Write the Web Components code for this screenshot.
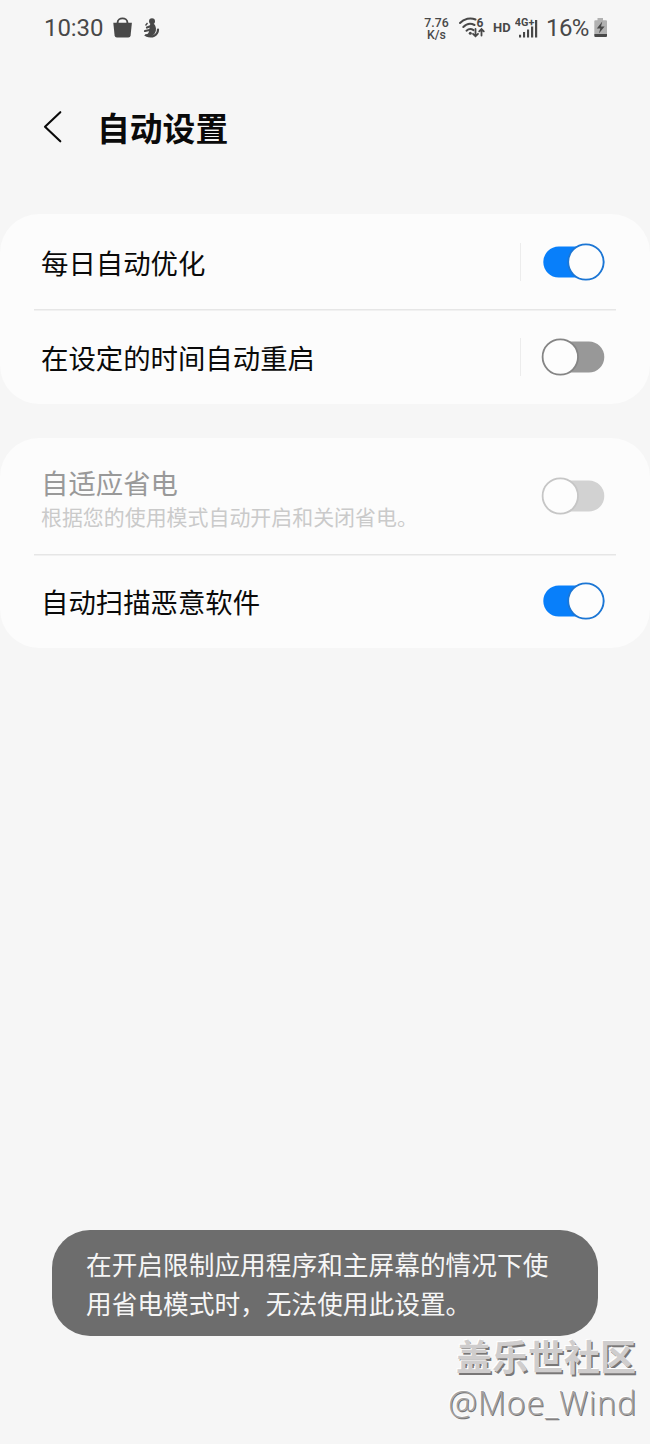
<!DOCTYPE html>
<html lang="zh-CN">
<head>
<meta charset="utf-8">
<title>自动设置</title>
<style>
html,body{margin:0;background:#f6f6f6}
body{font-family:"Noto Sans CJK SC",sans-serif;color:#0a0a0a}
</style>
</head>
<body>
<settings-screen></settings-screen>
<script>
const define=(name,html,setup)=>customElements.define(name,class extends HTMLElement{
  constructor(){
    super();
    const t=document.createElement('template');
    t.innerHTML=html;
    this.attachShadow({mode:'open'}).append(t.content.cloneNode(true));
  }
  connectedCallback(){ if(setup) setup(this,this.shadowRoot); }
});

define('status-bar',`<style>
:host{display:flex;height:56px;box-sizing:border-box;padding:0 42px 0 44px;align-items:center;justify-content:space-between;font-family:Roboto,sans-serif;color:#484848}
div{display:flex;align-items:center}
svg{display:block;flex:none}
.time{font-size:24px;line-height:28px;width:69px;white-space:nowrap;letter-spacing:-.1px}
.speed{display:flex;flex-direction:column;font-size:12.300px;line-height:12px;text-align:center;width:27px;font-weight:500;margin-right:8px;padding-top:1px}
.hd{font-size:13px;font-weight:700;width:22px;line-height:16px}
.pct{font-size:24px;line-height:28px;width:47px;white-space:nowrap;letter-spacing:-.6px}
</style>
<div><span class="time">10:30</span>
<svg width="48" height="24" viewBox="113 16 48 24"><path d="M117.600 24v-1.500c0-5.500 9.800-5.500 9.800 0V24" fill="none" stroke="#484848" stroke-width="1.900"/><path d="M113.300 22.800h18.600l-1.300 12.700q-.300 2-2.300 2h-11.400q-2 0-2.300-2z" fill="#484848"/>
<circle cx="152" cy="21.300" r="3" fill="#484848"/><path d="M150.300 23.500h3.500c2.500 3 2.900 6.500 1.200 9.500-2 4-8 4.500-11 2.200 3-.7 4.500-1.700 4.800-3.200z" fill="#484848"/><path d="M151 26l-4 1.500M149.500 30l-4.500 1M146 35.300c6 2.600 11.800.3 12-5.800" fill="none" stroke="#484848" stroke-width="2.200" stroke-linecap="round"/><path d="M145.500 25.500l2-2.500" stroke="#484848" stroke-width="1.300"/></svg></div>
<div><span class="speed"><span>7.76</span><span>K/s</span></span>
<svg width="35" height="26" viewBox="458 15 35 26"><g fill="none" stroke="#484848" stroke-width="2" stroke-linecap="round"><path d="M460 23c4-4.500 10.500-5.700 15.500-3.500M463.300 27c3-3.100 7.500-3.900 11.200-2M466.500 30.700c2-1.800 4.700-2 7-.6"/><path d="M475.500 29v7M473 33.800l2.500 2.500 2.500-2.500M481.500 35.500v-6M479.200 31.400l2.300-2.400 2.300 2.400" stroke-width="1.800"/></g><circle cx="470.300" cy="33.200" r="1.500" fill="#484848"/><text x="476.500" y="27.300" font-family="Roboto" font-size="12" font-weight="700" fill="#484848">6</text></svg>
<span class="hd">HD</span>
<svg width="31" height="26" viewBox="515 15 31 26"><g fill="#484848"><path d="M519 34.800h2.100v2.700H519zM523 32h2.100v5.500H523zM527 29.500h2.100v8H527zM531 26.500h2.200v11H531zM535 20h2.200v17.500H535z"/><text x="514.800" y="26" font-family="Roboto" font-size="11" font-weight="700" textLength="19.500" lengthAdjust="spacingAndGlyphs">4G+</text></g></svg>
<span class="pct">16%</span>
<svg width="15" height="24" viewBox="593 16 15 24"><path d="M597.500 18h5.500v2.300h3q1 0 1 1V34h-12.700V21.300q0-1 1-1h2.200z" fill="#b1b1b1"/><path d="M594.300 34H607v2q0 1-1 1h-10.700q-1 0-1-1z" fill="#484848"/><path d="M602.300 21.500l-5.500 7h3.500l-1.400 5 5.700-7h-3.600z" fill="#484848"/></svg></div>`);

define('page-header',`<style>
:host{display:flex;height:158px;box-sizing:border-box;padding:0 0 16px 43px;align-items:center}
svg{display:block;flex:none;margin-right:34px}
h1{margin:0;font-size:32.800px;font-weight:700;line-height:44px;color:#0a0a0a;padding-bottom:1px}
</style>
<svg width="20" height="34" viewBox="43 110 20 34"><path d="M60.300 112.200L45 126.700l15.300 14.600" fill="none" stroke="#0a0a0a" stroke-width="2.100" stroke-linecap="round" stroke-linejoin="round"/></svg><h1><slot></slot></h1>`);

define('toggle-switch',`<style>
:host{display:block;width:66px;height:40px;flex:none;--c:#989898;--edge:#858585}
:host([on]){--c:#087ffa;--edge:#1c76d4}
:host([disabled]){--c:#d2d2d2;--edge:#c6c6c6}
svg{display:block}
.track{fill:var(--c)}
.thumb{fill:#fdfdfd;stroke:var(--edge);stroke-width:1.800}
</style>
<svg width="66" height="40" viewBox="0 0 66 40"><rect class="track" x="3.300" y="4.500" width="61" height="31" rx="15.500"/><circle class="thumb" cx="20.300" cy="20" r="17.700"/></svg>`,
(host,root)=>{
  if(host.hasAttribute('on')) root.querySelector('.thumb').setAttribute('cx','45.900');
});

define('setting-row',`<style>
:host{display:flex;align-items:center;box-sizing:border-box;height:var(--h,95px);padding:0 44px 0 41px}
.text{flex:1;display:flex;flex-direction:column;padding-top:var(--drop,0)}
.label{font-size:27.400px;line-height:36px;color:#0a0a0a;white-space:nowrap}
.sub{font-size:20.950px;line-height:32px;color:#cacaca;white-space:nowrap}
.sep{display:none;width:1px;height:38px;background:#ececec;margin-right:19px}
:host([split]) .sep{display:block}
:host([disabled]) .label{color:#999}
</style>
<div class="text"><span class="label"><slot></slot></span><span class="sub"><slot name="sub"></slot></span></div><i class="sep"></i><slot name="control"></slot>`,
(host,root)=>{
  if(!host.querySelector('[slot=sub]')) root.querySelector('.sub').remove();
});

define('setting-card',`<style>
:host{display:block;background:#fcfcfc;border-radius:39px;margin-bottom:34px}
::slotted(setting-row:not(:first-child)){background:linear-gradient(#e6e6e6,#e6e6e6) 34px 0/582px 1.500px no-repeat}
</style><slot></slot>`);

define('toast-message',`<style>
:host{display:block;box-sizing:border-box;width:546px;height:106px;margin:0 0 0 52px;border-radius:38px;background:#6d6d6d;color:#f6f6f6;padding:14px 34px;font-size:25.700px;line-height:39px;white-space:nowrap}
</style><slot></slot>`);

define('community-watermark',`<style>
:host{display:flex;flex-direction:column;align-items:flex-end;padding-right:14px;color:#cfcdcd;margin-top:-3px}
b{font-size:36px;line-height:44px;font-weight:700;text-shadow:-1px -1px 0 #fff,1.500px 1.500px 0 #797777}
span{font:300 32.500px/44px "Open Sans",sans-serif;letter-spacing:.75px;margin:4px -1px 0 0;color:#a3a1a1;text-shadow:1px 1px 0 #777575,-1px -1px 0 #fff}
</style><b>盖乐世社区</b><span>@Moe_Wind</span>`);

define('settings-screen',`<style>
:host{display:flex;flex-direction:column;width:650px;height:1444px;overflow:hidden;background:#f6f6f6}
.space{flex:1}
.foot{height:214px;display:flex;flex-direction:column}
</style>
<status-bar></status-bar>
<page-header>自动设置</page-header>
<setting-card>
<setting-row split>每日自动优化<toggle-switch slot="control" on></toggle-switch></setting-row>
<setting-row split>在设定的时间自动重启<toggle-switch slot="control"></toggle-switch></setting-row>
</setting-card>
<setting-card>
<setting-row disabled style="--h:116px;--drop:3px">自适应省电<span slot="sub">根据您的使用模式自动开启和关闭省电。</span><toggle-switch slot="control" disabled></toggle-switch></setting-row>
<setting-row style="--h:94px">自动扫描恶意软件<toggle-switch slot="control" on></toggle-switch></setting-row>
</setting-card>
<div class="space"></div>
<div class="foot"><toast-message>在开启限制应用程序和主屏幕的情况下使<br>用省电模式时，无法使用此设置。</toast-message><community-watermark></community-watermark></div>`);
</script>
</body>
</html>
